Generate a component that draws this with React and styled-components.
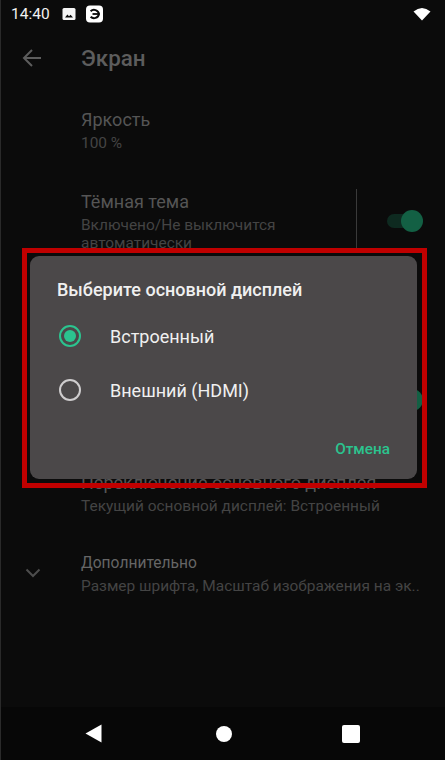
import React from "react";
import styled, { createGlobalStyle } from "styled-components";

const GlobalStyle = createGlobalStyle`
  html, body {
    margin: 0;
    padding: 0;
    background: #0b0b0b;
  }
  * {
    box-sizing: border-box;
  }
`;

const Screen = styled.div`
  position: relative;
  width: 445px;
  height: 760px;
  overflow: hidden;
  background: #0b0b0b;
  font-family: Roboto, "Noto Sans", sans-serif;
  display: flex;
  flex-direction: column;
  border-left: 1px solid #2a2a2a;
`;

const StatusBar = styled.div`
  height: 29px;
  flex: none;
  display: flex;
  align-items: center;
  padding: 0 14px 1px 10px;
  color: #f2f2f2;
  font-size: 15.5px;
  gap: 12px;
`;

const StatusIcons = styled.div`
  display: flex;
  align-items: center;
  gap: 10px;
`;

const Wifi = styled.svg`
  margin-left: auto;
`;

const TopBar = styled.div`
  height: 58px;
  flex: none;
  display: flex;
  align-items: center;
  padding-left: 19px;
  gap: 37px;
`;

const PageTitle = styled.div`
  color: #5d5d5d;
  font-size: 22.4px;
  font-weight: 500;
`;

const List = styled.div`
  flex: 1;
  display: flex;
  flex-direction: column;
  padding-top: 19px;
`;

const Row = styled.div`
  display: flex;
  align-items: center;
  flex: none;
  height: ${(p) => p.$height}px;
  padding-left: 80px;
`;

const RowText = styled.div`
  flex: 1;
  min-width: 0;
  align-self: flex-start;
`;

const RowTitle = styled.div`
  color: ${(p) => p.$color || "#555"};
  font-size: ${(p) => p.$size || 18}px;
  line-height: 28px;
  white-space: nowrap;
`;

const RowSub = styled.div`
  color: ${(p) => p.$color || "#444"};
  font-size: 15.45px;
  line-height: 18px;
  white-space: nowrap;
`;

const Divider = styled.div`
  width: 1px;
  height: 64px;
  background: #3a3a3a;
  flex: none;
  margin-right: 30px;
`;

const Track = styled.div`
  position: relative;
  width: 32px;
  height: 14px;
  border-radius: 7px;
  background: #0e2a20;
  margin-right: 26px;
  flex: none;
`;

const Knob = styled.div`
  position: absolute;
  right: -4px;
  top: -4px;
  width: 22px;
  height: 22px;
  border-radius: 50%;
  background: #136044;
`;

const Chevron = styled.svg`
  position: absolute;
  left: 24px;
  top: 565px;
`;

const NavBar = styled.div`
  height: 53px;
  flex: none;
  background: #070707;
  display: grid;
  grid-template-columns: 101px 130px 128px;
  justify-content: start;
  align-items: center;
`;

const NavSlot = styled.div`
  display: flex;
  justify-content: flex-end;
`;

const Highlight = styled.div`
  position: absolute;
  left: 21px;
  top: 248px;
  width: 405px;
  height: 240px;
  border: 5px solid #c00000;
  padding: 3px 5px 4px 3px;
`;

const Dialog = styled.div`
  height: 100%;
  border-radius: 9px;
  background: #4b4849;
  display: flex;
  flex-direction: column;
  padding: 23px 27px 0 27px;
`;

const DialogTitle = styled.div`
  color: #f0f0f0;
  font-size: 18px;
  font-weight: 500;
  line-height: 22px;
  margin-bottom: 8px;
`;

const Option = styled.div`
  height: 54px;
  display: flex;
  align-items: center;
  gap: 29px;
  color: #f0f0f0;
  font-size: 18px;
  padding-left: 2px;
`;

const Radio = styled.div`
  width: 22px;
  height: 22px;
  border-radius: 50%;
  border: 2px solid ${(p) => (p.$on ? "#2bc48f" : "#cfcdce")};
  display: flex;
  align-items: center;
  justify-content: center;
  flex: none;
  &::after {
    content: "";
    display: ${(p) => (p.$on ? "block" : "none")};
    width: 12px;
    height: 12px;
    border-radius: 50%;
    background: #2bc48f;
  }
`;

const Actions = styled.div`
  display: flex;
  justify-content: flex-end;
  margin-top: 23px;
`;

const Cancel = styled.div`
  color: #2bc48f;
  font-size: 15.3px;
  font-weight: 500;
`;

export default function App() {
  return (
    <>
      <GlobalStyle />
      <Screen>
        <StatusBar>
          <span>14:40</span>
          <StatusIcons>
            <svg width="14" height="14" viewBox="0 0 14 14">
              <rect x="0.5" y="1" width="13" height="12" rx="1.5" fill="#f5f5f5" />
              <path d="M3 10.5l2.4-3 1.6 1.8 1.6-1.5 2.4 2.7z" fill="#0b0b0b" />
            </svg>
            <svg width="17" height="18" viewBox="0 0 17 18">
              <rect x="0" y="0.5" width="17" height="17" rx="4" fill="#fff" />
              <path
                d="M4.6 6.3A5 5 0 0 1 13 9a5 5 0 0 1-8.4 2.7"
                fill="none"
                stroke="#0b0b0b"
                strokeWidth="2"
              />
              <path d="M6.5 9h6" stroke="#0b0b0b" strokeWidth="1.8" />
            </svg>
          </StatusIcons>
          <Wifi width="18" height="14" viewBox="0 0 18 14">
            <path d="M0.5 4.6Q9-2.6 17.5 4.6L9 13.5z" fill="#fff" />
          </Wifi>
        </StatusBar>

        <TopBar>
          <svg width="24" height="24" viewBox="0 0 24 24" fill="none" stroke="#5d5d5d" strokeWidth="2">
            <path d="M21 12H4M12 4l-8 8 8 8" />
          </svg>
          <PageTitle>Экран</PageTitle>
        </TopBar>

        <List>
          <Row $height={82}>
            <RowText>
              <RowTitle>Яркость</RowTitle>
              <RowSub>100 %</RowSub>
            </RowText>
          </Row>
          <Row $height={66}>
            <RowText>
              <RowTitle>Тёмная тема</RowTitle>
              <RowSub>
                Включено/Не выключится
                <br />
                автоматически
              </RowSub>
            </RowText>
            <Divider />
            <Track>
              <Knob />
            </Track>
          </Row>
          <Row $height={112} />
          <Row $height={68}>
            <RowText />
            <Track>
              <Knob />
            </Track>
          </Row>
          <Row $height={35} />
          <Row $height={80}>
            <RowText>
              <RowTitle>Переключение основного дисплея</RowTitle>
              <RowSub>Текущий основной дисплей: Встроенный</RowSub>
            </RowText>
          </Row>
          <Row $height={60}>
            <RowText>
              <RowTitle $size={15.6} $color="#666">
                Дополнительно
              </RowTitle>
              <RowSub>Размер шрифта, Масштаб изображения на эк..</RowSub>
            </RowText>
          </Row>
        </List>

        <Chevron width="16" height="16" viewBox="0 0 16 16" fill="none" stroke="#4d4d4d" strokeWidth="2">
          <path d="M1.5 4.5L8 11l6.5-6.5" />
        </Chevron>

        <NavBar>
          <NavSlot>
            <svg width="17" height="19" viewBox="0 0 17 19">
              <path d="M16.5 0.5v18L0.5 9.5z" fill="#fff" />
            </svg>
          </NavSlot>
          <NavSlot>
            <svg width="16" height="16" viewBox="0 0 16 16">
              <circle cx="8" cy="8" r="8" fill="#fff" />
            </svg>
          </NavSlot>
          <NavSlot>
            <svg width="18" height="18" viewBox="0 0 18 18">
              <rect width="18" height="18" rx="2" fill="#fff" />
            </svg>
          </NavSlot>
        </NavBar>

        <Highlight>
          <Dialog>
            <DialogTitle>Выберите основной дисплей</DialogTitle>
            <Option>
              <Radio $on />
              Встроенный
            </Option>
            <Option>
              <Radio />
              Внешний (HDMI)
            </Option>
            <Actions>
              <Cancel>Отмена</Cancel>
            </Actions>
          </Dialog>
        </Highlight>
      </Screen>
    </>
  );
}
